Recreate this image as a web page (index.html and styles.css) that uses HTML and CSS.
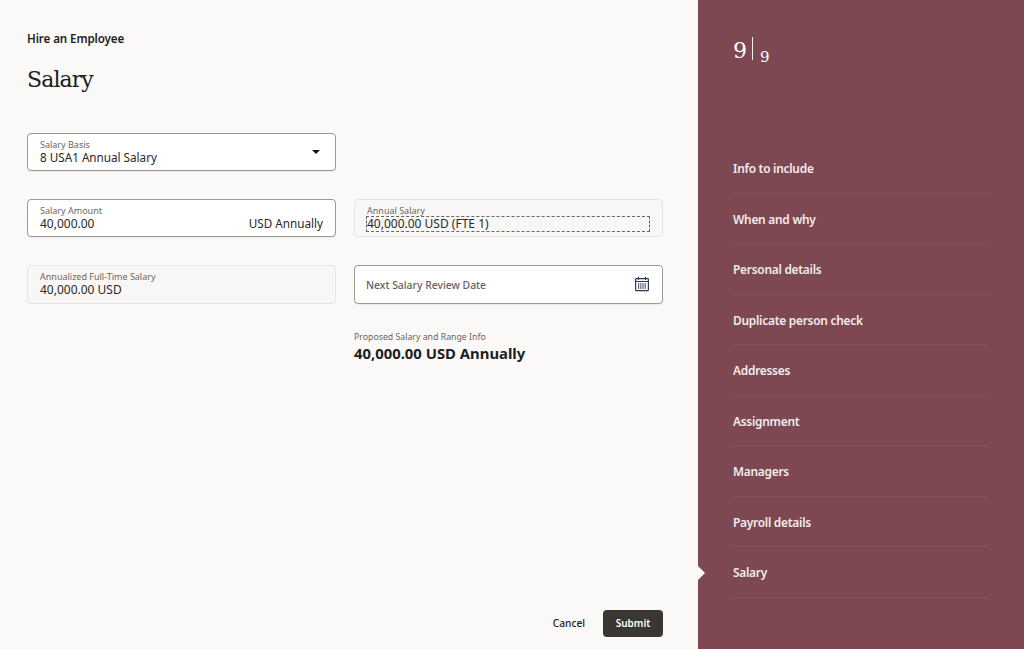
FILE: index.html
```html
<!DOCTYPE html>
<html lang="en">
<head>
<meta charset="utf-8">
<title>Hire an Employee</title>
<link rel="stylesheet" href="styles.css">
</head>
<body>
<div class="page">
  <main class="main">
    <div class="crumb">Hire an Employee</div>
    <h1 class="title">Salary</h1>
    <div class="row first">
      <div class="field editable with-end">
        <div class="stack"><span class="label">Salary Basis</span><span class="value">8 USA1 Annual Salary</span></div>
        <span class="caret"></span>
      </div>
    </div>
    <div class="row">
      <div class="field editable with-end">
        <div class="stack"><span class="label">Salary Amount</span><span class="value num">40,000.00</span></div>
        <span class="unit">USD Annually</span>
      </div>
      <div class="field readonly">
        <div class="stack"><span class="label">Annual Salary</span><span class="value num focus">40,000.00 USD (FTE 1)</span></div>
      </div>
    </div>
    <div class="row">
      <div class="field readonly tall">
        <div class="stack"><span class="label">Annualized Full-Time Salary</span><span class="value num">40,000.00 USD</span></div>
      </div>
      <div class="field editable tall with-end">
        <span class="placeholder">Next Salary Review Date</span>
        <svg class="cal" width="16" height="16" viewBox="0 0 16 16" fill="none" stroke="#2f3a55" stroke-width="1.2">
          <rect x="1.6" y="2.6" width="12.8" height="12" rx="0.6"/>
          <path d="M1.6 5.5h12.8M4.5 0.8v3M11.5 0.8v3"/>
          <path d="M4 8h8M4 10h8M4 12h8" stroke-dasharray="1 0.8" stroke-width="1.3"/>
        </svg>
      </div>
    </div>
    <div class="row">
      <div class="spacer"></div>
      <div class="summary">
        <div class="summary-label">Proposed Salary and Range Info</div>
        <div class="summary-value">40,000.00 USD Annually</div>
      </div>
    </div>
    <div class="actions">
      <button class="btn-text">Cancel</button>
      <button class="btn-primary">Submit</button>
    </div>
  </main>
  <aside class="side">
    <div class="counter"><span class="cur">9</span><span class="bar"></span><span class="tot">9</span></div>
    <nav class="steps">
      <div class="step">Info to include</div>
      <div class="step">When and why</div>
      <div class="step">Personal details</div>
      <div class="step">Duplicate person check</div>
      <div class="step">Addresses</div>
      <div class="step">Assignment</div>
      <div class="step">Managers</div>
      <div class="step">Payroll details</div>
      <div class="step current">Salary</div>
    </nav>
  </aside>
</div>
</body>
</html>
```
FILE: styles.css
```css
* { box-sizing: border-box; }
html, body { margin: 0; padding: 0; height: 100%; }
body { font-family: "Noto Sans", "Open Sans", sans-serif; background: #fbf9f8; color: #161513; overflow: hidden; }
.page { display: flex; height: 649px; }
.main { width: 698px; padding: 32px 35px 12px 27px; display: flex; flex-direction: column; }
.crumb { font-size: 11.6px; line-height: 14px; font-weight: 600; letter-spacing: -0.1px; color: #201e1c; }
.title { margin: 20px 0 0; font: 400 22px/28px "DejaVu Serif", "Liberation Serif", serif; letter-spacing: -0.9px; color: #201e1c; }
.row { display: grid; grid-template-columns: 309px 309px; column-gap: 18px; margin-bottom: 28px; }
.row.first { margin-top: 39px; }
.field { height: 38px; border-radius: 4px; padding: 5px 12px 0; display: flex; justify-content: space-between; }
.field.tall { height: 39px; }
.editable { background: #fff; border: 1px solid #9b9895; box-shadow: 0 1px 1px rgba(0,0,0,0.06); }
.readonly { background: #f9f7f5; border: 1px solid #e6e3e0; }
.stack { display: flex; flex-direction: column; flex: 1; min-width: 0; }
.label { font-size: 9px; line-height: 11px; color: #6a6662; }
.value { font-size: 11.7px; line-height: 15px; color: #2a2826; }
.num { font-size: 12px; }
.focus { outline: 1px dashed #6a6662; outline-offset: 0; width: 282px; height: 14px; margin-top: 1px; line-height: 13px; }
.unit { font-size: 11.7px; line-height: 15px; color: #2a2826; margin-top: 11px; }
.caret { width: 0; height: 0; border-left: 4px solid transparent; border-right: 4px solid transparent; border-top: 4px solid #161513; margin: 11px 3px 0 0; }
.placeholder { font-size: 10.4px; line-height: 14px; font-weight: 500; color: #65615e; margin: 7px 0 0 -1px; }
.cal { margin: 5px 0 0 0; }
.with-end { align-items: flex-start; }
.summary { margin-top: 0; }
.summary-label { font-size: 8.75px; line-height: 11px; color: #6a6662; }
.summary-value { font-size: 14.85px; line-height: 20px; font-weight: 700; color: #201e1c; }
.actions { margin-top: auto; display: flex; justify-content: flex-end; align-items: center; gap: 18px; }
.btn-text { background: none; border: 0; padding: 0 0 2px; font: 500 10.2px/14px "Noto Sans", sans-serif; color: #201e1c; }
.btn-primary { width: 60px; height: 27px; background: #3a3632; border: 0; border-radius: 4px; font: 600 10px/14px "Noto Sans", sans-serif; color: #fff; padding: 0 0 2px; }
.side { width: 326px; background: #7d4852; padding: 37px 35px 0; color: #fff; }
.counter { display: flex; align-items: flex-start; height: 106px; font-family: "DejaVu Serif", "Liberation Serif", serif; }
.cur { font-size: 22px; line-height: 28px; }
.bar { width: 1px; height: 23px; background: #f4eeee; margin: 0 7px 0 5px; }
.tot { font-size: 15px; line-height: 20px; margin-top: 10px; }
.steps { display: flex; flex-direction: column; }
.step { position: relative; height: 50.5px; padding-top: 18px; border-bottom: 1px solid #87525d; font-size: 11.9px; line-height: 15px; font-weight: 600; letter-spacing: -0.25px; color: #f3ecec; }
.current::before { content: ""; position: absolute; left: -35px; top: 19px; width: 0; height: 0; border-left: 7px solid #fbf9f8; border-top: 7px solid transparent; border-bottom: 7px solid transparent; }
```
